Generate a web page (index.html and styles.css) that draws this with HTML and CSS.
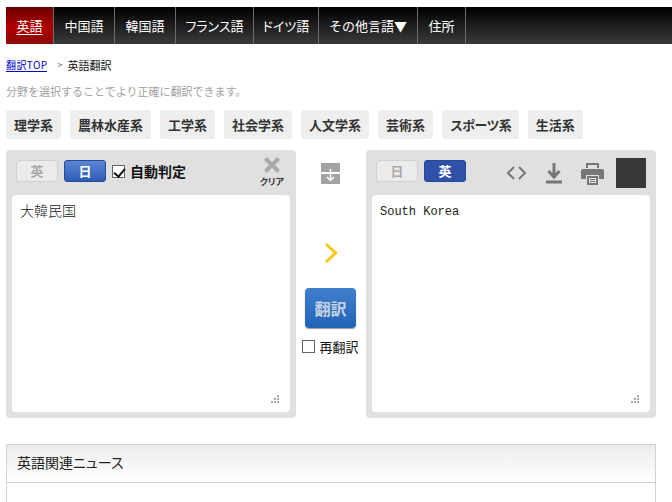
FILE: index.html
```html
<!DOCTYPE html>
<html lang="ja">
<head>
<meta charset="utf-8">
<title>英語翻訳</title>
<link rel="stylesheet" href="styles.css">
</head>
<body>
<nav class="nav">
  <a class="nav-item active w47">英語</a>
  <a class="nav-item w60">中国語</a>
  <a class="nav-item w60">韓国語</a>
  <a class="nav-item w77 kana">フランス語</a>
  <a class="nav-item w64 kana">ドイツ語</a>
  <a class="nav-item w98">その他言語▼</a>
  <a class="nav-item w47">住所</a>
</nav>
<div class="crumbs"><a class="crumb-link">翻訳TOP</a><span class="crumb-sep">&gt;</span><span class="crumb-here">英語翻訳</span></div>
<p class="desc">分野を選択することでより正確に翻訳できます。</p>
<div class="tags">
  <span class="tag">理学系</span><span class="tag">農林水産系</span><span class="tag">工学系</span><span class="tag">社会学系</span><span class="tag">人文学系</span><span class="tag">芸術系</span><span class="tag tag-kana">スポーツ系</span><span class="tag">生活系</span>
</div>
<main class="translator">
  <section class="panel">
    <div class="panel-head">
      <span class="lang">英</span><span class="lang on">日</span>
      <label class="auto"><input class="check" type="checkbox" checked>自動判定</label>
      <div class="clear">
        <svg width="18" height="16" viewBox="0 0 18 16"><path d="M2.500 1.500 15.500 14.500M15.500 1.500 2.500 14.500" stroke="#a9a9a9" stroke-width="4" fill="none"/></svg>
        <span class="clear-label">クリア</span>
      </div>
    </div>
    <textarea class="text jp" spellcheck="false">大韓民国</textarea>
    <svg class="grip" width="9" height="9" viewBox="0 0 9 9"><path d="M6 0h2v2H6zM3 3h2v2H3zM6 3h2v2H6zM0 6h2v2H0zM3 6h2v2H3zM6 6h2v2H6z" fill="#aaa"/></svg>
  </section>
  <div class="middle">
    <svg class="swap" width="19" height="21" viewBox="0 0 19 21"><path d="M0 0h19v9H0zM0 11h19v10H0z" fill="#a3a3a3"/><path d="M9.500 6v11M6 14l3.500 3.500L13 14" stroke="#fff" stroke-width="1.500" fill="none"/></svg>
    <svg class="arrow" width="14" height="22" viewBox="0 0 14 22"><path d="M2 2 11.500 11 2 20" stroke="#fbc715" stroke-width="3" fill="none"/></svg>
    <button class="go" type="button">翻訳</button>
    <label class="again"><input class="check" type="checkbox">再翻訳</label>
  </div>
  <section class="panel">
    <div class="panel-head">
      <span class="lang">日</span><span class="lang on dark">英</span>
      <div class="tools">
        <svg class="tool-code" width="21" height="16" viewBox="0 0 21 16"><path d="M8 2 2 8l6 6M13 2l6 6-6 6" stroke="#777" stroke-width="2" fill="none"/></svg>
        <svg class="tool-save" width="18" height="23" viewBox="0 0 18 23"><path d="M9 1v13M3.500 9 9 15l5.500-6" stroke="#777" stroke-width="3" fill="none"/><path d="M1 20h16" stroke="#777" stroke-width="3"/></svg>
        <svg class="tool-print" width="23" height="23" viewBox="0 0 23 23"><path d="M5 1h13v5h-2V3H7v3H5z" fill="#777"/><path d="M2 7h19a2 2 0 0 1 2 2v8h-5v-4H5v4H0V9a2 2 0 0 1 2-2z" fill="#777"/><path d="M6 14h11v9H6z" fill="#777"/><path d="M8 16h7v5H8z" fill="#e0e0e0"/><path d="M9 17.500h5M9 19.500h5" stroke="#777"/></svg>
        <span class="swatch"></span>
      </div>
    </div>
    <textarea class="text en" spellcheck="false">South Korea</textarea>
    <svg class="grip" width="9" height="9" viewBox="0 0 9 9"><path d="M6 0h2v2H6zM3 3h2v2H3zM6 3h2v2H6zM0 6h2v2H0zM3 6h2v2H3zM6 6h2v2H6z" fill="#aaa"/></svg>
  </section>
</main>
<section class="news">
  <h2 class="news-title">英語関連ニュース</h2>
</section>
</body>
</html>
```

FILE: styles.css
```css
* { box-sizing: border-box; }
html, body { margin: 0; height: 502px; overflow: hidden; }
body { background: #fff; color: #222; font-family: "Noto Sans CJK JP", "Liberation Sans", sans-serif; font-size: 13px; padding: 7px 0 0 6px; }

.nav { display: flex; height: 37px; background: linear-gradient(#000, #3a3a3a); }
.nav-item { display: flex; align-items: center; justify-content: center; height: 37px; color: #fff; font-size: 13px; border-right: 1px solid #6a6a6a; flex: none; }
.kana { font-feature-settings: "palt"; }
.active { background: linear-gradient(#6b0000, #b00000 55%, #8a0a0a); text-decoration: underline; text-underline-offset: 3px; }
.w47 { width: 48px; }
.w60 { width: 61px; }
.w64 { width: 65px; }
.w77 { width: 78px; }
.w98 { width: 99px; }

.crumbs { display: flex; align-items: center; height: 14px; margin-top: 14px; font-size: 10px; line-height: 14px; }
.crumb-link { color: #0000c8; border-bottom: 1px solid #0000c8; height: 14px; letter-spacing: 0.4px; }
.crumb-sep { color: #666; font-size: 9px; margin: 0 5px 0 10px; }
.crumb-here { color: #111; font-size: 11px; }

.desc { margin: 9px 0 0; height: 20px; line-height: 20px; color: #a2a2a2; font-size: 11px; }

.tags { display: flex; gap: 9px; margin-top: 9px; }
.tag { height: 29px; line-height: 29px; padding: 0 8px; background: #eee; border-radius: 3px; color: #333; font-size: 13px; font-weight: 700; }
.tag-kana { letter-spacing: -0.8px; }

.translator { display: flex; margin-top: 11px; height: 268px; }
.panel { position: relative; width: 290px; height: 268px; background: #e0e0e0; border-radius: 4px; padding: 0 6px 6px; display: flex; flex-direction: column; }
.panel-head { display: flex; align-items: flex-start; height: 45px; padding: 10px 0 0 4px; position: relative; }
.lang { width: 42px; height: 22px; margin-right: 6px; line-height: 20px; text-align: center; font-size: 13px; font-weight: 700; color: #aaa; background: #ebebeb; border: 1px solid #d0d0d0; border-radius: 3px; }
.lang.on { color: #fff; background: linear-gradient(#5a86d6, #2f5cb4); border-color: #24499c; margin-right: 0; }
.lang.dark { background: #2f52a8; }
.auto { display: flex; align-items: center; height: 22px; margin-left: 6px; color: #111; font-size: 14px; font-weight: 700; gap: 5px; }
.check { appearance: none; position: relative; flex: none; width: 13px; height: 13px; margin: 0; background: #fff; border: 1px solid #666; border-radius: 0; }
.check:checked::after { content: ""; position: absolute; left: 3px; top: 0; width: 5px; height: 9px; border: solid #111; border-width: 0 2px 2px 0; transform: rotate(40deg); }
.clear { position: absolute; right: 6px; top: 7px; display: flex; flex-direction: column; align-items: center; }
.clear-label { font-size: 9px; line-height: 11px; font-weight: 700; color: #333; margin-top: 3px; font-feature-settings: "palt"; }
.tools { display: flex; align-items: center; position: absolute; right: 4px; top: 8px; height: 30px; }
.tool-code { margin-right: 18px; }
.tool-save { margin-right: 18px; }
.tool-print { margin-right: 12px; }
.swatch { width: 30px; height: 30px; background: #38383b; }

.text { display: block; flex: 1; width: 100%; border: 0; outline: 0; border-radius: 4px; background: #fff; padding: 8px; color: #222; resize: none; margin: 0; }
.jp { font-family: "Noto Sans CJK JP", sans-serif; font-size: 14px; line-height: 17px; padding-top: 7px; font-weight: 300; }
.en { font-family: "Liberation Mono", monospace; font-size: 12px; line-height: 17px; padding-top: 9px; }
.grip { position: absolute; right: 16px; bottom: 14px; }

.middle { width: 70px; display: flex; flex-direction: column; align-items: center; padding-right: 1px; }
.swap { margin: 13px 0 0; }
.arrow { margin-top: 58px; }
.go { width: 51px; height: 40px; margin-top: 24px; padding: 0; border: 0; border-radius: 4px; background: linear-gradient(#4180cd, #2163b8); box-shadow: 0 1px 1px #999; color: #c6d2e2; font-family: "Noto Sans CJK JP", sans-serif; font-size: 16px; font-weight: 700; }
.again { display: flex; align-items: center; gap: 4px; margin-top: 10px; font-size: 13px; color: #111; height: 16px; }

.news { margin-top: 26px; width: 650px; height: 58px; border: 1px solid #d2d2d2; border-bottom: 0; }
.news-title { margin: 0; height: 38px; line-height: 34px; padding-left: 10px; font-size: 14px; font-weight: 400; color: #222; background: linear-gradient(#ececec, #fff); border-bottom: 1px solid #cfcfcf; font-feature-settings: "palt"; }
```
